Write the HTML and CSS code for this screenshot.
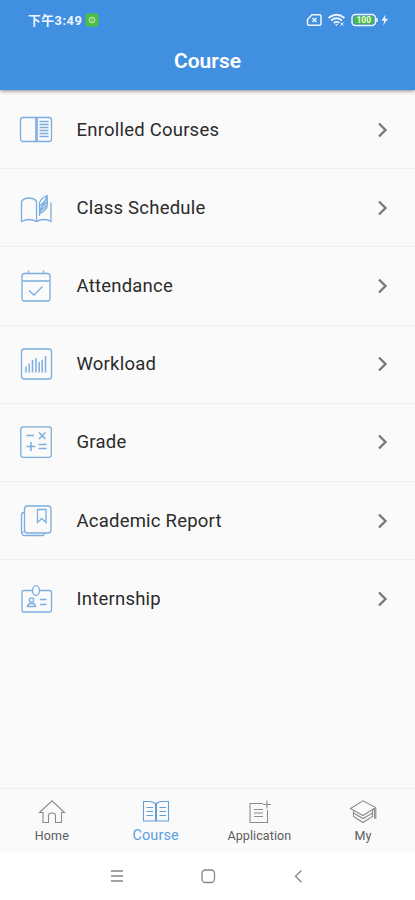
FILE: index.html
```html
<!DOCTYPE html>
<html lang="en">
<head>
<meta charset="utf-8">
<meta name="viewport" content="width=device-width">
<title>Course</title>
<link rel="stylesheet" href="styles.css">
</head>
<body>
<div class="screen">
  <header class="top">
    <div class="status">
      <span class="time">下午3:49</span>
      <svg class="badge" width="14" height="14" viewBox="0 0 14 14"><rect x=".5" y=".5" width="13" height="13" rx="2.5" fill="#4fbd42"/><circle cx="7" cy="7" r="3" fill="#83d276" stroke="#b2e3a6"/><path d="M5.5 7h3" stroke="#4fae49"/></svg>
      <svg class="status-icons" width="84" height="16" viewBox="0 0 84 16" fill="none" stroke="#edf6ff" stroke-width="1.5">
        <path d="M6 2.8h7.5q1.5 0 1.5 1.5v7.4q0 1.500-1.500 1.500H3q-1.500 0-1.500-1.500V7.500z"/><path d="M6.500 6l4 4m0-4l-4 4"/>
        <path d="M22.500 6Q30.500-.5 38.500 6M25 8.500q5.500-4.500 11 0M27.800 11q2.700-2.200 5.400 0" stroke-width="1.8"/><path d="M29 12.200h3l-1.500 1.800z" fill="#edf6ff" stroke="none"/><path d="M34.500 10.500l3 3m0-3l-3 3" stroke-width="1"/>
        <rect x="46" y="2.500" width="23.500" height="11" rx="3.500"/><rect x="48" y="4.300" width="19.500" height="7.400" rx="1.800" fill="#4abb40" stroke="none"/><path d="M71 6v4"/>
        <text x="57.800" y="11" class="charge">100</text>
        <path d="M79.500 2.500L75.500 8.700h2.800L77 13.500l5-6.700h-3z" fill="#edf6ff" stroke="none"/>
      </svg>
    </div>
    <h1>Course</h1>
  </header>

  <main class="list">
    <a class="row"><svg class="icon" viewBox="0 0 36 36"><rect x="2.500" y="5.500" width="31" height="24" rx="2.500"/><path d="M17.800 5.500v24M19.200 5.500v24M21.500 9.500h9M21.500 12.500h9M21.500 15.500h9M21.500 18.500h9M21.500 21.500h9M21.500 24.500h9"/></svg><span>Enrolled Courses</span><svg class="chevron" viewBox="0 0 12 16"><path d="M2 1.500L8.500 8 2 14.500"/></svg></a>
    <a class="row"><svg class="icon" viewBox="0 0 36 36"><path d="M18.500 31.500V11.500Q16 8 11 8T3.500 11.500V31.500Q11 27.500 18.500 31.500Q22 29.500 26 29.500T33 31.500V12.500"/><path d="M21.500 26V13Q23 8 29 5.500Q30 13 28.500 18Q26 21.500 22 23.500M21.500 23L29 6M22 16l6-6M22 19l7-7M22.500 21l6.500-6"/></svg><span>Class Schedule</span><svg class="chevron" viewBox="0 0 12 16"><path d="M2 1.500L8.500 8 2 14.500"/></svg></a>
    <a class="row"><svg class="icon" viewBox="0 0 36 36"><rect x="4" y="5.500" width="28" height="27.500" rx="2.500"/><path d="M4 13h28M10.500 2.500v3M25.500 2.500v3M11 22.500l5 4.500 8.500-8.500"/></svg><span>Attendance</span><svg class="chevron" viewBox="0 0 12 16"><path d="M2 1.500L8.500 8 2 14.500"/></svg></a>
    <a class="row"><svg class="icon" viewBox="0 0 36 36"><rect x="3.500" y="3" width="30" height="30" rx="2.500"/><path d="M8 26.500v-6M11.200 26.500V17.500M14.500 26.500V14M18 26.500V12M21.200 26.500V16M24.200 26.500V14M27.500 26.500V10" stroke-width="1.500"/></svg><span>Workload</span><svg class="chevron" viewBox="0 0 12 16"><path d="M2 1.500L8.500 8 2 14.500"/></svg></a>
    <a class="row"><svg class="icon" viewBox="0 0 36 36"><rect x="2.800" y="2.800" width="30.500" height="30.500" rx="2.500"/><path d="M8.500 11.500h7.500M21 8.500l6.500 6.500m0-6.500L21 15M8.500 22.500h9M13 18v9M20.500 20.500h8M20.500 24.500h8" stroke-width="1.500"/></svg><span>Grade</span><svg class="chevron" viewBox="0 0 12 16"><path d="M2 1.500L8.500 8 2 14.500"/></svg></a>
    <a class="row"><svg class="icon" viewBox="0 0 36 36"><rect x="6.500" y="3" width="26.500" height="27" rx="3"/><path d="M6 9.500Q3.500 9.500 3.500 12.500V29q0 3.500 3.500 3.500h17q2 0 3-2M4 29.500l3-1M19.500 6.500h8.500v13l-4.250-4-4.250 4z"/></svg><span>Academic Report</span><svg class="chevron" viewBox="0 0 12 16"><path d="M2 1.500L8.500 8 2 14.500"/></svg></a>
    <a class="row"><svg class="icon" viewBox="0 0 36 36"><path d="M14.500 9.500H6q-2 0-2 2V29q0 2 2 2h25.500q2 0 2-2V11.500q0-2-2-2H21.500"/><ellipse cx="18" cy="9.500" rx="3.500" ry="4.800"/><circle cx="13.500" cy="19" r="2.200"/><path d="M9.500 25.500q.5-3 3-3h2q2.500 0 3 3zM22 18.500h6.500M22 23.500h6.500" stroke-width="1.500"/></svg><span>Internship</span><svg class="chevron" viewBox="0 0 12 16"><path d="M2 1.500L8.500 8 2 14.500"/></svg></a>
  </main>

  <nav class="tabs">
    <a class="tab"><svg viewBox="0 0 28 26"><path d="M1.500 13.500L14 1.800 26.500 13.500H23.500V23.500H17.500V16.500Q17.500 14 14 14T10.500 16.500V23.500H5V13.500z"/></svg><span>Home</span></a>
    <a class="tab active"><svg viewBox="0 0 28 26"><path d="M13.500 4.500Q10.500 2.500 7 2.500H1.500V22H26.500V2.500H20Q16.500 2.500 14.500 4.500M13.500 4V22M14.500 4V22M4.500 8.500h6.500M4.500 12.500h6.500M4.500 16.500h6.500M17.500 8.500h6.500M17.500 12.500h6.500M17.500 16.500h6.500"/></svg><span>Course</span></a>
    <a class="tab"><svg viewBox="0 0 28 26"><path d="M18 4.500H5V23.500H22.500V11M9 10.500h9M9 14h9M9 17.500h9M22 1.500v8M18 5.500h8"/></svg><span>Application</span></a>
    <a class="tab"><svg viewBox="0 0 28 26"><path d="M1.500 9.500L14 1.800 26.500 8.500 14 16.500zM4.500 12v5.500L14 23.500l9.500-6V11M4.500 14l9.500 5.500 9.500-5.500M25.500 9v10.500M26.800 9v11"/></svg><span>My</span></a>
  </nav>

  <footer class="system">
    <svg viewBox="0 0 18 18"><path d="M3 4h12M3 9h12M3 14h12"/></svg>
    <svg viewBox="0 0 18 18"><rect x="3" y="3" width="12.500" height="12.500" rx="3.500"/></svg>
    <svg viewBox="0 0 18 18"><path d="M11.500 3.500L5.500 9.300l6 6"/></svg>
  </footer>
</div>
</body>
</html>
```
FILE: styles.css
```css
* { box-sizing: border-box; }

body {
  margin: 0;
  background: #fff;
  font-family: Roboto, "Noto Sans CJK SC", sans-serif;
}

.screen {
  height: 900px;
  display: flex;
  flex-direction: column;
  background: #fafafa;
}

.top {
  height: 90px;
  flex: none;
  background: #418fe0;
  color: #fff;
  box-shadow: 0 1px 4px rgba(0, 0, 0, .45);
}

.status {
  height: 38px;
  padding: 1px 25px 0 28px;
  display: flex;
  align-items: center;
  color: #edf6ff;
}

.time {
  font-size: 12.8px;
  font-weight: 700;
  letter-spacing: .5px;
}

.badge { margin-left: 3px; }
.status-icons { margin-left: auto; }

.charge {
  fill: #e8ffe5;
  stroke: none;
  font-size: 8.5px;
  font-weight: 700;
  text-anchor: middle;
}

h1 {
  margin: 10px 0 0;
  text-align: center;
  font-size: 21px;
  line-height: 26px;
  font-weight: 600;
  letter-spacing: 0;
}

.list {
  flex: 1;
  display: grid;
  grid-auto-rows: 78.2px;
  align-content: start;
  padding-top: 1px;
}

.row {
  display: flex;
  align-items: center;
  padding: 0 26px 0 18px;
  border-bottom: 1px solid #f0f0f0;
  color: #2b2b2b;
  font-size: 18.5px;
  letter-spacing: .22px;
}

.row:last-child { border-bottom: 0; }

.icon {
  width: 36px;
  height: 36px;
  margin-right: 22.5px;
  fill: none;
  stroke: #7badde;
  stroke-width: 1.3;
}

.chevron {
  width: 12px;
  height: 16px;
  margin-left: auto;
  fill: none;
  stroke: #777;
  stroke-width: 2.3;
}

.tabs {
  height: 64px;
  flex: none;
  display: grid;
  grid-template-columns: repeat(4, 1fr);
  border-top: 1px solid #f0f0f0;
}

.tab {
  display: flex;
  flex-direction: column;
  align-items: center;
  padding-top: 10px;
  color: #5c5c5c;
  font-size: 12.5px;
  line-height: 18px;
  letter-spacing: .1px;
}

.tab svg {
  width: 28px;
  height: 26px;
  margin-bottom: 2px;
  fill: none;
  stroke: #8c8c8c;
  stroke-width: 1.1;
}

.active {
  color: #5a9fe0;
  font-size: 14.5px;
}

.active svg { stroke: #659fd8; }

.system {
  height: 48px;
  flex: none;
  display: flex;
  justify-content: center;
  align-items: center;
  gap: 73px;
  padding-bottom: 1px;
  background: #fff;
}

.system svg {
  width: 18px;
  height: 18px;
  fill: none;
  stroke: #858585;
  stroke-width: 1.3;
}
```
